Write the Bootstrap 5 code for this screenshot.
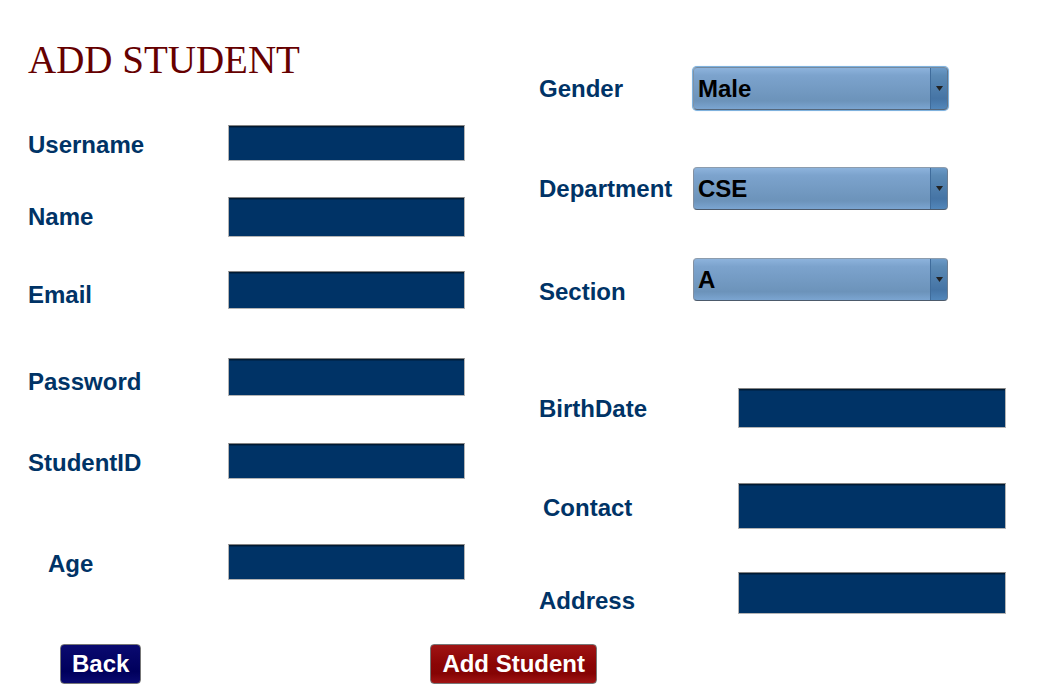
<!DOCTYPE html>
<html lang="en">
<head>
<meta charset="utf-8">
<meta name="viewport" content="width=device-width, initial-scale=1">
<title>Add Student</title>
<link href="https://cdn.jsdelivr.net/npm/bootstrap@5.3.0/dist/css/bootstrap.min.css" rel="stylesheet">
<style>
  body { font-family: "Liberation Sans", Arial, sans-serif; background: #fff; color: #036; }
  .page { padding: 0 46px 0 28px; }
  .columns { display: grid; grid-template-columns: 437fr 467fr; column-gap: 74px; }
  .page-title { font: 39px/48px "Liberation Serif", "Times New Roman", serif; color: #600; margin: 36px 0 41px; }
  .fields { display: grid; }
  .fields-account { grid-template-rows: 72px 74px 87px 85px 101px 36px; }
  .fields-details { grid-template-rows: 100px 91px 130px 95px 89px 42px; margin-top: 67px; }
  .field-label { flex: none; width: 200px; font-size: 24px; font-weight: 700; line-height: 40px; white-space: nowrap; }
  .fields-details .field-label { width: 199px; line-height: 42px; }
  .fields-details .label-short { width: 154px; line-height: 44px; }
  .h-36 { height: 36px; } .h-38 { height: 38px; } .h-40 { height: 40px; } .h-42 { height: 42px; } .h-46 { height: 46px; }
  .field-box, .field-box:focus {
    flex: 1; min-width: 0; padding: 0 6px; border-radius: 0; color: #fff; font-size: 24px;
    background: #036; border: 1px solid #b4b4b4; border-top-color: #848484;
    box-shadow: inset 0 1px #001a33, inset 0 2px #002850;
  }
  .picker {
    flex: 1; height: 43px; margin-right: 58px; padding: 0 24px 0 4px;
    font-size: 24px; font-weight: 700; line-height: 36px; color: #000;
    border: 1px solid; border-color: #8c9cad #6c7e92 #4c5a6b #8490a0; border-radius: 4px;
    background:
      url("data:image/svg+xml,%3Csvg xmlns='http://www.w3.org/2000/svg' width='7' height='5'%3E%3Cpath d='M0 0h7L3.5 5z' fill='%23222222'/%3E%3C/svg%3E") no-repeat right 4px center / 7px 5px,
      linear-gradient(#3f6c9b, #3f6c9b) no-repeat right 16px top / 1px 100%,
      linear-gradient(#6b9ac8, #5b8ab5 18%, #4574a5 75%, #5287bb) no-repeat right / 16px 100%,
      linear-gradient(#8db3dc, #7ca3cd 18%, #6c93ba 80%, #7ba5d1);
  }
  .picker:focus { border-color: #73899f #60748a #55677b #7e92a6; box-shadow: 0 0 0 1px #7fb2de, 0 0 1px 1px #a9cdec; }
  .actions { gap: 289px; padding: 30px 0 10px 32px; }
  .btn-form, .btn-form:hover {
    height: 40px; padding: 0 11px; font-size: 24px; font-weight: 700; line-height: 38px;
    color: #fff; border: 1px solid #777; border-radius: 4px; white-space: nowrap;
  }
  .btn-back, .btn-back:hover { background: linear-gradient(#0a0a70, #00005c 70%, #0a0a70); }
  .btn-add, .btn-add:hover { background: linear-gradient(#a01414, #8b0505 50%, #850404 75%, #a01414); }
</style>
</head>
<body>
<form class="page container-fluid">
  <div class="columns">
    <section>
      <h1 class="page-title">ADD STUDENT</h1>
      <div class="fields fields-account">
        <div class="d-flex align-items-start"><label class="field-label" for="username">Username</label><input class="form-control field-box h-36" id="username" type="text"></div>
        <div class="d-flex align-items-start"><label class="field-label" for="name">Name</label><input class="form-control field-box h-40" id="name" type="text"></div>
        <div class="d-flex align-items-start"><label class="field-label pt-1" for="email">Email</label><input class="form-control field-box h-38" id="email" type="email"></div>
        <div class="d-flex align-items-start"><label class="field-label pt-1" for="password">Password</label><input class="form-control field-box h-38" id="password" type="password"></div>
        <div class="d-flex align-items-start"><label class="field-label" for="studentid">StudentID</label><input class="form-control field-box h-36" id="studentid" type="text"></div>
        <div class="d-flex align-items-start"><label class="field-label ps-3" for="age"><span class="ps-1">Age</span></label><input class="form-control field-box h-36" id="age" type="text"></div>
      </div>
    </section>
    <section class="fields fields-details">
      <div class="d-flex align-items-start"><label class="field-label label-short" for="gender">Gender</label><select class="form-select picker" id="gender" autofocus><option>Male</option><option>Female</option></select></div>
      <div class="d-flex align-items-start"><label class="field-label label-short" for="department">Department</label><select class="form-select picker" id="department"><option>CSE</option></select></div>
      <div class="d-flex align-items-start"><label class="field-label label-short pt-2" for="section"><span class="d-block pt-1">Section</span></label><select class="form-select picker" id="section"><option>A</option></select></div>
      <div class="d-flex align-items-start"><label class="field-label" for="birthdate">BirthDate</label><input class="form-control field-box h-40" id="birthdate" type="text"></div>
      <div class="d-flex align-items-start"><label class="field-label pt-1 ps-1" for="contact">Contact</label><input class="form-control field-box h-46" id="contact" type="text"></div>
      <div class="d-flex align-items-start"><label class="field-label pt-2" for="address">Address</label><input class="form-control field-box h-42" id="address" type="text"></div>
    </section>
  </div>
  <div class="actions d-flex">
    <button class="btn btn-form btn-back" type="button">Back</button>
    <button class="btn btn-form btn-add" type="submit">Add Student</button>
  </div>
</form>
<script src="https://cdn.jsdelivr.net/npm/bootstrap@5.3.0/dist/js/bootstrap.bundle.min.js"></script>
</body>
</html>
